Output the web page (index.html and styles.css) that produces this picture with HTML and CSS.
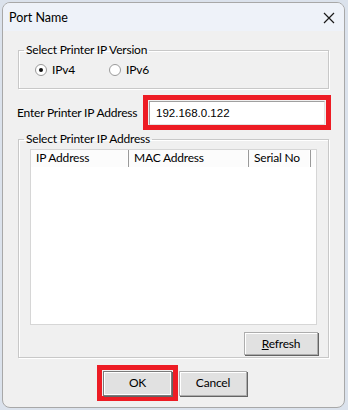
FILE: index.html
```html
<!DOCTYPE html>
<html>
<head>
<meta charset="utf-8">
<link rel="stylesheet" href="styles.css">
</head>
<body>
<div class="window">
  <div class="titlebar">
    <span class="title">Port Name</span>
    <svg class="close" width="12" height="12" viewBox="0 0 12 12"><path d="M1 1L11 11M11 1L1 11" stroke="#1a1a1a" stroke-width="1.2" fill="none"/></svg>
  </div>
  <div class="content">
    <fieldset class="group g1">
      <legend>Select Printer IP Version</legend>
      <div class="radios">
        <label class="radio"><span class="dot checked"></span>IPv4</label>
        <label class="radio"><span class="dot"></span>IPv6</label>
      </div>
    </fieldset>
    <div class="iprow">
      <span class="iplabel">Enter Printer IP Address</span>
      <div class="redbox"><div class="input">192.168.0.122</div></div>
    </div>
    <fieldset class="group g2">
      <legend>Select Printer IP Address</legend>
      <div class="list">
        <div class="header">
          <div class="col c1">IP Address</div>
          <div class="col c2">MAC Address</div>
          <div class="col c3">Serial No</div>
          <div class="col c4"></div>
        </div>
        <div class="rows"></div>
      </div>
      <div class="refrow"><button class="btn refresh"><u>R</u>efresh</button></div>
    </fieldset>
    <div class="buttons">
      <div class="redok"><button class="btn ok">OK</button></div>
      <button class="btn cancel">Cancel</button>
    </div>
  </div>
</div>
</body>
</html>
```
FILE: styles.css
```css
* { box-sizing: border-box; }
html, body { margin: 0; padding: 0; }
body {
  width: 348px; height: 410px; overflow: hidden;
  background: #dbe2ec;
  padding: 2px 3px 0 2px;
  font-family: Lato, "Noto Sans", sans-serif;
  font-size: 12px; letter-spacing: -0.2px; color: #000;
}
.window {
  width: 343px; height: 406px;
  border: 1px solid #a8a8a8;
  border-radius: 8px;
  background: #f0f0f0;
  overflow: hidden;
  display: flex; flex-direction: column;
}
.titlebar {
  height: 28px; background: #eef2f9;
  display: flex; align-items: center; justify-content: space-between;
  padding: 0 9px 0 6px;
}
.title { font-size: 12.5px; letter-spacing: 0; }
.close { margin-top: 1px; }
.content {
  padding: 11px 0 0 15px;
  display: flex; flex-direction: column;
}
.group {
  margin: 0; padding: 0;
  width: 311px;
  border: 1px solid #c8c8c8;
  box-shadow: 1px 1px 0 #fff, inset 1px 1px 0 #fff;
}
.group legend {
  margin-left: 5px; padding: 0 2px;
  line-height: 16px;
  white-space: nowrap;
}
.g1 { height: 47px; }
.radios { display: flex; padding: 4px 0 0 16px; }
.radio { display: flex; align-items: center; line-height: 16px; }
.radio:first-child { width: 74px; }
.dot {
  width: 12px; height: 12px; border-radius: 50%;
  border: 1px solid #9a9a9a; background: #fff;
  margin-right: 5px;
  display: flex; align-items: center; justify-content: center;
}
.dot.checked::after {
  content: ""; width: 4px; height: 4px; border-radius: 50%; background: #111;
}
.iprow {
  display: flex; align-items: center;
  margin-top: 6px; margin-left: -1px;
  height: 35px;
}
.iplabel { width: 126px; white-space: nowrap; }
.redbox {
  width: 188px; height: 35px;
  border: 5px solid #ed1c24;
  padding: 0 1px 0 1px;
  display: flex; align-items: center;
}
.input {
  width: 100%; height: 24px;
  background: #fff;
  border-top: 1px solid #a0a0a0; border-left: 1px solid #a0a0a0;
  border-right: 1px solid #e3e3e3; border-bottom: 1px solid #e3e3e3;
  font-family: "Liberation Sans", Arial, sans-serif; font-size: 11.5px; letter-spacing: 0;
  padding: 4px 0 0 6px; line-height: 14px;
}
.g2 { margin-top: 1px; height: 227px; padding: 0 11px 0 11px; }
.g2 legend { margin-left: -6px; }
.list {
  width: 287px; height: 176px; background: #fff;
  border: 1px solid #d6d6d6;
  display: flex; flex-direction: column;
  margin-top: 2px;
}
.header { display: flex; height: 17px; background: #fcfcfc; }
.col {
  line-height: 16px; padding-left: 5px;
  border-right: 1px solid #9a9a9a;
  box-shadow: inset -1px 0 0 #fff;
  white-space: nowrap;
}
.c1 { width: 98px; }
.c2 { width: 120px; }
.c3 { width: 62px; }
.c4 { flex: 1; border-right: none; }
.rows { flex: 1; }
.refrow { display: flex; justify-content: flex-end; padding-top: 7px; }
.btn {
  font-family: Lato, "Noto Sans", sans-serif; font-size: 12px; letter-spacing: -0.2px;
  background: #e1e1e1; color: #000;
  border: 1px solid #adadad;
  box-shadow: inset 1px 1px 0 #fff, 1px 1px 0 #646464;
  padding: 0; height: 23px; line-height: 20px;
}
.refresh { width: 74px; margin-right: -1px; }
.buttons { display: flex; align-items: center; margin-top: 7px; padding-left: 79px; }
.redok { border: 5px solid #ed1c24; width: 81px; height: 36px; padding: 0 0 0 1px; display: flex; align-items: center; }
.ok { width: 69px; height: 25px; border: 1px solid #7a7a7a; box-shadow: inset 0 0 0 1px #fff, 1px 1px 0 #646464; }
.cancel { width: 68px; height: 25px; margin-left: 1px; }
```
